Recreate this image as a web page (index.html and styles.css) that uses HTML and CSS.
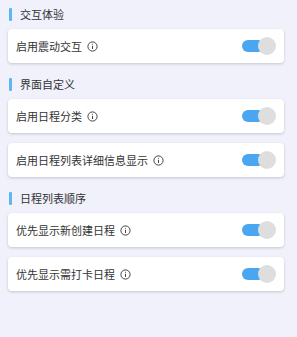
FILE: index.html
```html
<!DOCTYPE html>
<html lang="zh">
<head>
<meta charset="utf-8">
<link rel="stylesheet" href="styles.css">
</head>
<body>
<div class="page">
  <div class="section">
    <div class="section-title"><span class="bar"></span>交互体验</div>
    <div class="card"><span class="label">启用震动交互<svg class="info" viewBox="0 0 11 11"><circle cx="5.5" cy="5.5" r="4.6"/><line x1="5.5" y1="4.8" x2="5.5" y2="8"/><line x1="5.5" y1="2.8" x2="5.5" y2="3.7"/></svg></span><span class="switch"><span class="track"></span><span class="knob"></span></span></div>
  </div>
  <div class="section">
    <div class="section-title"><span class="bar"></span>界面自定义</div>
    <div class="card"><span class="label">启用日程分类<svg class="info" viewBox="0 0 11 11"><circle cx="5.5" cy="5.5" r="4.6"/><line x1="5.5" y1="4.8" x2="5.5" y2="8"/><line x1="5.5" y1="2.8" x2="5.5" y2="3.7"/></svg></span><span class="switch"><span class="track"></span><span class="knob"></span></span></div>
    <div class="card"><span class="label">启用日程列表详细信息显示<svg class="info" viewBox="0 0 11 11"><circle cx="5.5" cy="5.5" r="4.6"/><line x1="5.5" y1="4.8" x2="5.5" y2="8"/><line x1="5.5" y1="2.8" x2="5.5" y2="3.7"/></svg></span><span class="switch"><span class="track"></span><span class="knob"></span></span></div>
  </div>
  <div class="section">
    <div class="section-title"><span class="bar"></span>日程列表顺序</div>
    <div class="card"><span class="label">优先显示新创建日程<svg class="info" viewBox="0 0 11 11"><circle cx="5.5" cy="5.5" r="4.6"/><line x1="5.5" y1="4.8" x2="5.5" y2="8"/><line x1="5.5" y1="2.8" x2="5.5" y2="3.7"/></svg></span><span class="switch"><span class="track"></span><span class="knob"></span></span></div>
    <div class="card"><span class="label">优先显示需打卡日程<svg class="info" viewBox="0 0 11 11"><circle cx="5.5" cy="5.5" r="4.6"/><line x1="5.5" y1="4.8" x2="5.5" y2="8"/><line x1="5.5" y1="2.8" x2="5.5" y2="3.7"/></svg></span><span class="switch"><span class="track"></span><span class="knob"></span></span></div>
  </div>
</div>
</body>
</html>
```

FILE: styles.css
```css
html, body {
  margin: 0;
  padding: 0;
  background: #f0f1fb;
}
body {
  font-family: "Noto Sans CJK SC", "Noto Sans", sans-serif;
  color: #333;
  width: 297px;
  height: 337px;
  overflow: hidden;
}
.page {
  padding: 7px 13px 0 8px;
  display: flex;
  flex-direction: column;
  gap: 14px;
}
.section {
  display: flex;
  flex-direction: column;
  gap: 10px;
}
.section-title {
  display: flex;
  align-items: center;
  height: 14px;
  font-size: 11px;
  line-height: 14px;
  color: #333;
  margin-bottom: -2px;
}
.bar {
  width: 3px;
  height: 13px;
  background: #5bb8f2;
  border-radius: 1px;
  margin-left: 1px;
  margin-right: 8px;
}
.card {
  height: 34px;
  background: #fff;
  border-radius: 4px;
  box-shadow: 0 1px 3px rgba(0, 0, 0, 0.18);
  display: flex;
  align-items: center;
  justify-content: space-between;
  padding: 0 8px 0 8px;
}
.label {
  display: flex;
  align-items: center;
  font-size: 11px;
  color: #333;
}
.info {
  width: 11px;
  height: 11px;
  margin-left: 5px;
  fill: none;
  stroke: #444;
  stroke-width: 1;
}
.switch {
  position: relative;
  width: 34px;
  height: 18px;
  display: flex;
  align-items: center;
}
.track {
  width: 22px;
  height: 12px;
  border-radius: 6px;
  background: #4aa6f0;
}
.knob {
  position: absolute;
  right: 0;
  top: 0;
  width: 18px;
  height: 18px;
  border-radius: 50%;
  background: #dedede;
}
```
